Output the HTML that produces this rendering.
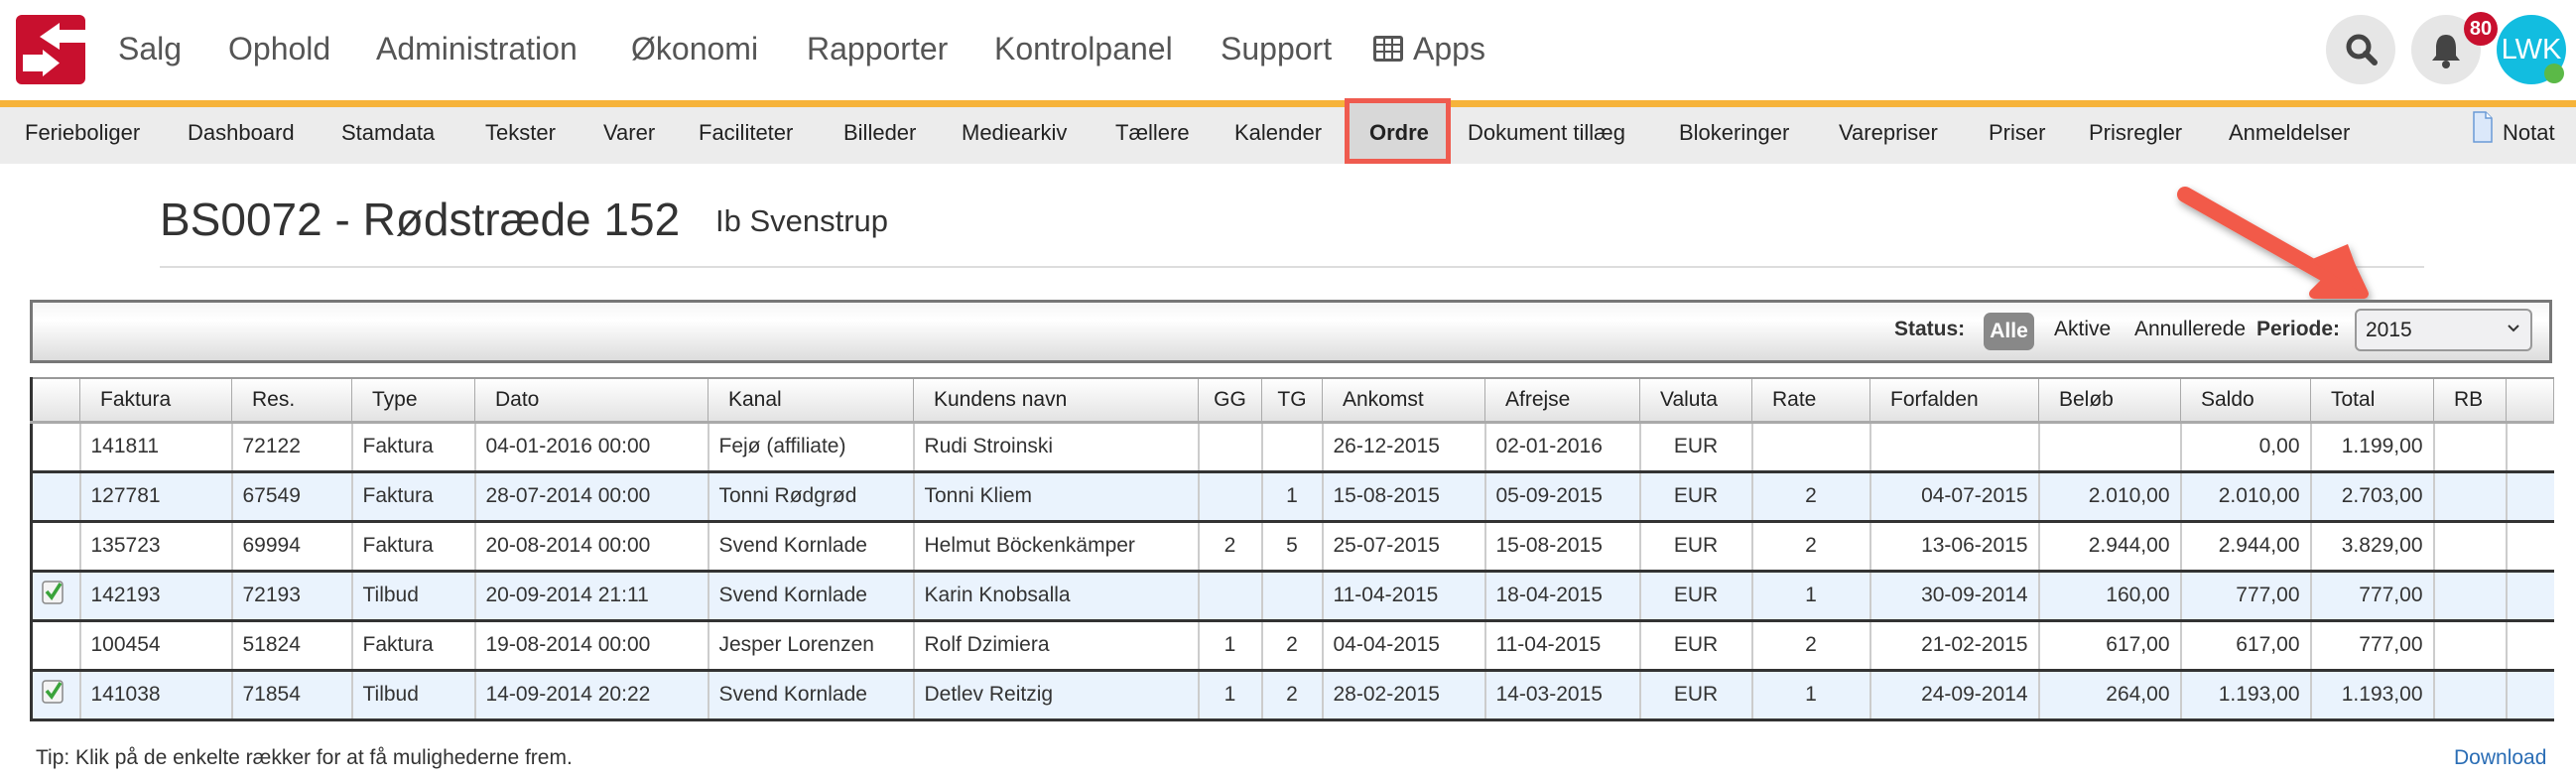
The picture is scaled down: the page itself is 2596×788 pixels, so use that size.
<!DOCTYPE html>
<html><head><meta charset="utf-8"><style>
*{box-sizing:border-box;margin:0;padding:0}
body{width:2596px;height:788px;background:#fff;font-family:"Liberation Sans",sans-serif;position:relative;overflow:hidden;color:#222}
.a{position:absolute;white-space:nowrap}
.top{position:absolute;left:0;top:0;width:2596px;height:102px;background:#fff}
.tn{position:absolute;top:31px;font-size:32px;color:#555}
.orange{position:absolute;left:0;top:101px;width:2596px;height:7px;background:#f6b33a}
.sub{position:absolute;left:0;top:108px;width:2596px;height:57px;background:#ececec}
.sn{position:absolute;top:121px;font-size:22px;color:#222}
table{position:absolute;left:30px;top:380px;border-collapse:collapse;table-layout:fixed;font-size:21px;width:2542px}
th{height:44px;font-weight:normal;text-align:left;padding-left:20px;background:linear-gradient(#fff,#e3e3e3);border:1px solid #aaa;border-top:2px solid #999;border-bottom:3px solid #aaa}
td{height:50px;padding:0 10px;border-left:2px solid #ccc;border-bottom:3px solid #333;color:#333}
tr.b td{background:#eaf3fd}
td.c{text-align:center}td.r{text-align:right}
td:first-child,th:first-child{border-left:3px solid #333}
</style></head><body>
<div class="top"></div>
<svg class="a" style="left:16px;top:15px" width="70" height="70" viewBox="0 0 70 70"><rect x="0" y="0" width="70" height="70" rx="6" fill="#c8102e"/><path d="M24 22 L44 8 L44 15 L70 15 L70 28 L44 28 L44 35Z" fill="#fff"/><path d="M7 40 L27 40 L27 35 L44 48.5 L27 62 L27 57 L7 57Z" fill="#fff"/></svg>
<div class="tn" style="left:119px">Salg</div>
<div class="tn" style="left:230px">Ophold</div>
<div class="tn" style="left:379px">Administration</div>
<div class="tn" style="left:636px">Økonomi</div>
<div class="tn" style="left:813px">Rapporter</div>
<div class="tn" style="left:1002px">Kontrolpanel</div>
<div class="tn" style="left:1230px">Support</div>
<svg class="a" style="left:1384px;top:36px" width="30" height="26" viewBox="0 0 30 26"><g fill="#555"><rect x="0" y="0" width="30" height="26" rx="3"/></g><g fill="#fff"><rect x="3" y="3" width="7" height="5"/><rect x="12" y="3" width="6" height="5"/><rect x="20" y="3" width="7" height="5"/><rect x="3" y="10" width="7" height="5"/><rect x="12" y="10" width="6" height="5"/><rect x="20" y="10" width="7" height="5"/><rect x="3" y="17" width="7" height="6"/><rect x="12" y="17" width="6" height="6"/><rect x="20" y="17" width="7" height="6"/></g></svg>
<div class="tn" style="left:1424px">Apps</div>
<div class="a" style="left:2344px;top:15px;width:70px;height:70px;border-radius:50%;background:#e6e6e6"></div>
<svg class="a" style="left:2362px;top:32px" width="36" height="36" viewBox="0 0 36 36"><circle cx="15" cy="15" r="10" stroke="#444" stroke-width="5" fill="none"/><path d="M22 22 L31 31" stroke="#444" stroke-width="6" stroke-linecap="round"/></svg>
<div class="a" style="left:2430px;top:15px;width:70px;height:70px;border-radius:50%;background:#e6e6e6"></div>
<svg class="a" style="left:2448px;top:32px" width="34" height="38" viewBox="0 0 34 38"><path d="M17 3 C9 3 7 10 7 16 L7 24 L3 29 L31 29 L27 24 L27 16 C27 10 25 3 17 3Z" fill="#444"/><circle cx="17" cy="33" r="4" fill="#444"/></svg>
<div class="a" style="left:2483px;top:12px;width:34px;height:34px;border-radius:50%;background:#c8102e;color:#fff;font-size:20px;font-weight:bold;text-align:center;line-height:34px">80</div>
<div class="a" style="left:2516px;top:15px;width:70px;height:70px;border-radius:50%;background:#12bde0;color:#fff;font-size:29px;text-align:center;line-height:70px">LWK</div>
<div class="a" style="left:2564px;top:64px;width:20px;height:20px;border-radius:50%;background:#5bb947"></div>
<div class="orange"></div>
<div class="sub"></div>
<div class="a" style="left:1355px;top:99px;width:107px;height:66px;border:5px solid #ef5b4f;background:#d8d8d8"></div>
<div class="sn" style="left:25px">Ferieboliger</div>
<div class="sn" style="left:189px">Dashboard</div>
<div class="sn" style="left:344px">Stamdata</div>
<div class="sn" style="left:489px">Tekster</div>
<div class="sn" style="left:608px">Varer</div>
<div class="sn" style="left:704px">Faciliteter</div>
<div class="sn" style="left:850px">Billeder</div>
<div class="sn" style="left:969px">Mediearkiv</div>
<div class="sn" style="left:1124px">Tællere</div>
<div class="sn" style="left:1244px">Kalender</div>
<div class="sn" style="left:1380px;font-weight:bold">Ordre</div>
<div class="sn" style="left:1479px">Dokument tillæg</div>
<div class="sn" style="left:1692px">Blokeringer</div>
<div class="sn" style="left:1853px">Varepriser</div>
<div class="sn" style="left:2004px">Priser</div>
<div class="sn" style="left:2105px">Prisregler</div>
<div class="sn" style="left:2246px">Anmeldelser</div>
<svg class="a" style="left:2492px;top:112px" width="20" height="32" viewBox="0 0 20 32"><path d="M1 1 L13 1 L19 7 L19 31 L1 31Z" fill="#dbe8fa" stroke="#6a9ad6" stroke-width="1.5"/><path d="M13 1 L13 7 L19 7" fill="#fff" stroke="#6a9ad6" stroke-width="1.5"/></svg>
<div class="sn" style="left:2522px">Notat</div>
<div class="a" style="left:161px;top:194px;font-size:46px;color:#333">BS0072 - Rødstræde 152</div>
<div class="a" style="left:721px;top:205px;font-size:31px;color:#333">Ib Svenstrup</div>
<div class="a" style="left:161px;top:268px;width:2282px;height:2px;background:#ddd"></div>
<svg class="a" style="left:2180px;top:170px" width="230" height="140" viewBox="0 0 230 140"><defs><filter id="s"><feDropShadow dx="2" dy="4" stdDeviation="4" flood-opacity="0.35"/></filter></defs><g filter="url(#s)"><path d="M22 26 L170 110" stroke="#f25a48" stroke-width="16" stroke-linecap="round"/><path d="M202 126 L152 126 L186 92Z" fill="#f25a48" stroke="#f25a48" stroke-width="10" stroke-linejoin="round"/><path d="M148 92 L186 76 L205 128Z" fill="#f25a48"/></g></svg>
<div class="a" style="left:30px;top:302px;width:2542px;height:64px;border:3px solid #777;background:linear-gradient(#f6f6f6,#fff 30%,#ddd)"></div>
<div class="a" style="left:1909px;top:320px;font-size:21px;font-weight:bold;color:#333">Status:</div>
<div class="a" style="left:1999px;top:315px;width:51px;height:38px;border-radius:7px;background:#888;color:#fff;font-size:21px;font-weight:bold;text-align:center;line-height:38px">Alle</div>
<div class="a" style="left:2070px;top:320px;font-size:21px;color:#222">Aktive</div>
<div class="a" style="left:2151px;top:320px;font-size:21px;color:#222">Annullerede</div>
<div class="a" style="left:2274px;top:320px;font-size:21px;font-weight:bold;color:#333">Periode:</div>
<div class="a" style="left:2373px;top:311px;width:179px;height:43px;border:2px solid #999;border-radius:6px;background:#f0f0f2;font-size:21px;line-height:39px;padding-left:9px;color:#222">2015</div>
<svg class="a" style="left:2526px;top:326px" width="14" height="10" viewBox="0 0 14 10"><path d="M2 2 L7 7 L12 2" stroke="#333" stroke-width="2" fill="none"/></svg>
<table>
<colgroup><col style="width:49px"><col style="width:153px"><col style="width:121px"><col style="width:124px"><col style="width:235px"><col style="width:207px"><col style="width:287px"><col style="width:64px"><col style="width:61px"><col style="width:164px"><col style="width:156px"><col style="width:113px"><col style="width:119px"><col style="width:170px"><col style="width:143px"><col style="width:131px"><col style="width:124px"><col style="width:73px"><col style="width:48px"></colgroup>
<tr><th></th><th>Faktura</th><th>Res.</th><th>Type</th><th>Dato</th><th>Kanal</th><th>Kundens navn</th><th style="padding:0;text-align:center">GG</th><th style="padding:0;text-align:center">TG</th><th>Ankomst</th><th>Afrejse</th><th>Valuta</th><th>Rate</th><th>Forfalden</th><th>Beløb</th><th>Saldo</th><th>Total</th><th>RB</th><th></th></tr>
<tr><td></td><td>141811</td><td>72122</td><td>Faktura</td><td>04-01-2016 00:00</td><td>Fejø (affiliate)</td><td>Rudi Stroinski</td><td class="c"></td><td class="c"></td><td>26-12-2015</td><td>02-01-2016</td><td class="c">EUR</td><td class="c"></td><td class="r"></td><td class="r"></td><td class="r">0,00</td><td class="r">1.199,00</td><td></td><td></td></tr>
<tr class="b"><td></td><td>127781</td><td>67549</td><td>Faktura</td><td>28-07-2014 00:00</td><td>Tonni Rødgrød</td><td>Tonni Kliem</td><td class="c"></td><td class="c">1</td><td>15-08-2015</td><td>05-09-2015</td><td class="c">EUR</td><td class="c">2</td><td class="r">04-07-2015</td><td class="r">2.010,00</td><td class="r">2.010,00</td><td class="r">2.703,00</td><td></td><td></td></tr>
<tr><td></td><td>135723</td><td>69994</td><td>Faktura</td><td>20-08-2014 00:00</td><td>Svend Kornlade</td><td>Helmut Böckenkämper</td><td class="c">2</td><td class="c">5</td><td>25-07-2015</td><td>15-08-2015</td><td class="c">EUR</td><td class="c">2</td><td class="r">13-06-2015</td><td class="r">2.944,00</td><td class="r">2.944,00</td><td class="r">3.829,00</td><td></td><td></td></tr>
<tr class="b"><td style="padding:0 0 0 9px"><svg width="24" height="26" viewBox="0 0 24 26"><rect x="1" y="2" width="20" height="22" rx="3" fill="#f4f4f4" stroke="#888" stroke-width="1.5"/><path d="M5 12 L10 18 L19 4" stroke="#3aa33a" stroke-width="3.5" fill="none"/></svg></td><td>142193</td><td>72193</td><td>Tilbud</td><td>20-09-2014 21:11</td><td>Svend Kornlade</td><td>Karin Knobsalla</td><td class="c"></td><td class="c"></td><td>11-04-2015</td><td>18-04-2015</td><td class="c">EUR</td><td class="c">1</td><td class="r">30-09-2014</td><td class="r">160,00</td><td class="r">777,00</td><td class="r">777,00</td><td></td><td></td></tr>
<tr><td></td><td>100454</td><td>51824</td><td>Faktura</td><td>19-08-2014 00:00</td><td>Jesper Lorenzen</td><td>Rolf Dzimiera</td><td class="c">1</td><td class="c">2</td><td>04-04-2015</td><td>11-04-2015</td><td class="c">EUR</td><td class="c">2</td><td class="r">21-02-2015</td><td class="r">617,00</td><td class="r">617,00</td><td class="r">777,00</td><td></td><td></td></tr>
<tr class="b"><td style="padding:0 0 0 9px"><svg width="24" height="26" viewBox="0 0 24 26"><rect x="1" y="2" width="20" height="22" rx="3" fill="#f4f4f4" stroke="#888" stroke-width="1.5"/><path d="M5 12 L10 18 L19 4" stroke="#3aa33a" stroke-width="3.5" fill="none"/></svg></td><td>141038</td><td>71854</td><td>Tilbud</td><td>14-09-2014 20:22</td><td>Svend Kornlade</td><td>Detlev Reitzig</td><td class="c">1</td><td class="c">2</td><td>28-02-2015</td><td>14-03-2015</td><td class="c">EUR</td><td class="c">1</td><td class="r">24-09-2014</td><td class="r">264,00</td><td class="r">1.193,00</td><td class="r">1.193,00</td><td></td><td></td></tr>
</table>
<div class="a" style="left:36px;top:752px;font-size:21px;color:#333">Tip: Klik på de enkelte rækker for at få mulighederne frem.</div>
<div class="a" style="left:2473px;top:752px;font-size:21px;color:#2a6db5">Download</div>
</body></html>
